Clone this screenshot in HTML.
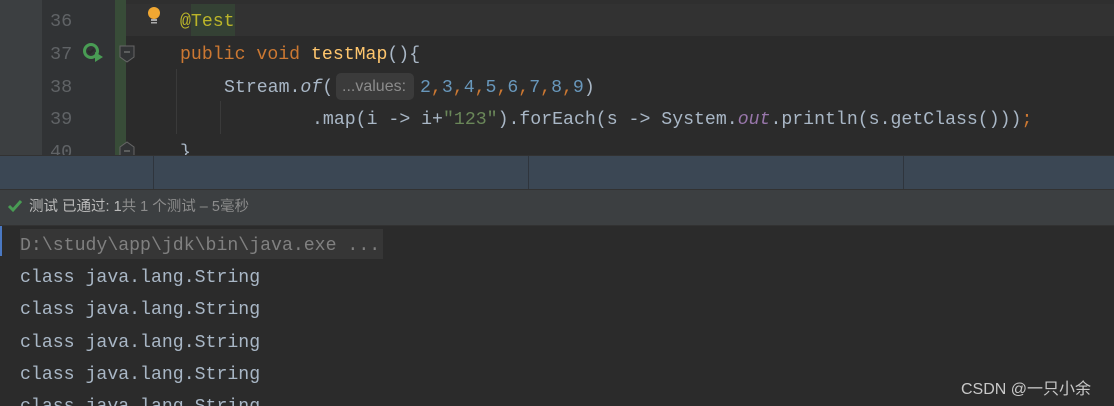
<!DOCTYPE html>
<html style="width:1114px;height:406px;overflow:hidden"><head><meta charset="utf-8"><style>
*{margin:0;padding:0;box-sizing:border-box}
body{width:1114px;height:406px;overflow:hidden;background:#2b2b2b;position:relative;font-family:"Liberation Mono",monospace}
.abs{position:absolute}
.code{font-size:18.2px;color:#a9b7c6;white-space:pre;line-height:32px}
.ln{font-size:18.5px;color:#606366;white-space:pre;line-height:32px;width:72px;text-align:left}
</style></head><body>
<div class="abs" style="left:0;top:0;width:42px;height:155px;background:#3c3f41"></div>
<div class="abs" style="left:42px;top:0;width:73px;height:155px;background:#313335"></div>
<div class="abs" style="left:115px;top:0;width:11px;height:155px;background:#384c38"></div>
<div class="abs" style="left:126px;top:0;width:988px;height:4px;background:#2f2f2f"></div>
<div class="abs" style="left:126px;top:4px;width:988px;height:32px;background:#323232"></div>
<div class="abs" style="left:191px;top:4px;width:44px;height:32px;background:#344134"></div>
<div class="abs" style="left:176px;top:69px;width:1px;height:65px;background:#3a3a3a"></div>
<div class="abs" style="left:220px;top:101px;width:1px;height:33px;background:#3a3a3a"></div>
<div class="abs ln" style="left:50px;top:6px">36</div>
<div class="abs ln" style="left:50px;top:39px">37</div>
<div class="abs ln" style="left:50px;top:72px">38</div>
<div class="abs ln" style="left:50px;top:104px">39</div>
<div class="abs ln" style="left:50px;top:137px">40</div>
<svg class="abs" style="left:145px;top:6px" width="18" height="20" viewBox="0 0 18 20"><circle cx="9" cy="7" r="6" fill="#f0a732"/><rect x="6" y="13" width="6" height="2" fill="#aaa"/><rect x="6" y="16" width="6" height="1.5" fill="#aaa"/></svg>
<svg class="abs" style="left:83px;top:43px" width="22" height="20" viewBox="0 0 22 20"><circle cx="8" cy="8" r="6.5" fill="none" stroke="#499c54" stroke-width="3"/><path d="M5 8l2 2 4-4" stroke="#2b2b2b" stroke-width="2" fill="none"/><path d="M12 9l8 5-8 5z" fill="#499c54"/></svg>
<svg class="abs" style="left:119px;top:45px" width="16" height="18" viewBox="0 0 16 18"><path d="M1 1h14v11l-7 5-7-5z" fill="#313335" stroke="#666" stroke-width="1"/><path d="M5 7h6" stroke="#888"/></svg>
<svg class="abs" style="left:119px;top:141px" width="16" height="18" viewBox="0 0 16 18"><path d="M1 17V6l7-5 7 5v11z" fill="#313335" stroke="#666"/><path d="M5 10h6" stroke="#888"/></svg>
<div class="abs code" style="left:180px;top:6px"><span style="color:#bbb529">@Test</span></div>
<div class="abs code" style="left:180px;top:39px"><span style="color:#cc7832">public void </span><span style="color:#ffc66d">testMap</span>(){</div>
<div class="abs code" style="left:224px;top:72px">Stream.<i>of</i>(</div>
<div class="abs" style="left:336px;top:73px;width:78px;height:27px;background:#3b3b3b;border-radius:5px;color:#8c8c8c;font-family:'Liberation Sans',sans-serif;font-size:16px;line-height:27px;padding-left:6px">...values:</div>
<div class="abs code" style="left:420px;top:72px"><span style="color:#6897bb">2</span><span style="color:#cc7832">,</span><span style="color:#6897bb">3</span><span style="color:#cc7832">,</span><span style="color:#6897bb">4</span><span style="color:#cc7832">,</span><span style="color:#6897bb">5</span><span style="color:#cc7832">,</span><span style="color:#6897bb">6</span><span style="color:#cc7832">,</span><span style="color:#6897bb">7</span><span style="color:#cc7832">,</span><span style="color:#6897bb">8</span><span style="color:#cc7832">,</span><span style="color:#6897bb">9</span>)</div>
<div class="abs code" style="left:312px;top:104px">.map(i -&gt; i+<span style="color:#6a8759">"123"</span>).forEach(s -&gt; System.<i style="color:#9876aa">out</i>.println(s.getClass()))<span style="color:#cc7832">;</span></div>
<div class="abs code" style="left:180px;top:137px">}</div>
<div class="abs" style="left:0;top:155px;width:1114px;height:35px;background:#3b4754;border-top:1px solid #323232"></div>
<div class="abs" style="left:153px;top:156px;width:1px;height:34px;background:#2f353d"></div>
<div class="abs" style="left:528px;top:156px;width:1px;height:34px;background:#2f353d"></div>
<div class="abs" style="left:903px;top:156px;width:1px;height:34px;background:#2f353d"></div>
<div class="abs" style="left:0;top:189px;width:1114px;height:1px;background:#323232"></div>
<div class="abs" style="left:0;top:190px;width:1114px;height:35px;background:#3c3f41"></div>
<div class="abs" style="left:0;top:225px;width:1114px;height:1px;background:#323232"></div>
<svg class="abs" style="left:7px;top:199px" width="16" height="14" viewBox="0 0 16 14"><path d="M2 7l4 4 8-9" stroke="#499c54" stroke-width="3" fill="none"/></svg>
<div class="abs" style="left:29px;top:197px;font-family:'Liberation Sans','Noto Sans CJK SC',sans-serif;font-size:14.5px;line-height:20px;color:#bbbbbb;white-space:pre">测试 已通过: 1<span style="color:#8c8c8c">共 1 个测试 – 5毫秒</span></div>
<div class="abs" style="left:0;top:226px;width:2px;height:30px;background:#4a78c2"></div>
<div class="abs" style="left:20px;top:229px;width:363px;height:30px;background:#363636"></div>
<div class="abs code" style="left:20px;top:230px;color:#808080">D:\study\app\jdk\bin\java.exe ...</div>
<div class="abs code" style="left:20px;top:262px">class java.lang.String</div>
<div class="abs code" style="left:20px;top:294px">class java.lang.String</div>
<div class="abs code" style="left:20px;top:327px">class java.lang.String</div>
<div class="abs code" style="left:20px;top:359px">class java.lang.String</div>
<div class="abs" style="left:0;top:391px;width:1114px;height:15px;overflow:hidden"><div class="abs code" style="left:20px;top:0">class java.lang.String</div></div>
<div class="abs" style="left:961px;top:375px;font-family:'Liberation Sans','Noto Sans CJK SC',sans-serif;font-size:16px;color:#c8c8c8;white-space:pre">CSDN @一只小余</div>
</body></html>
